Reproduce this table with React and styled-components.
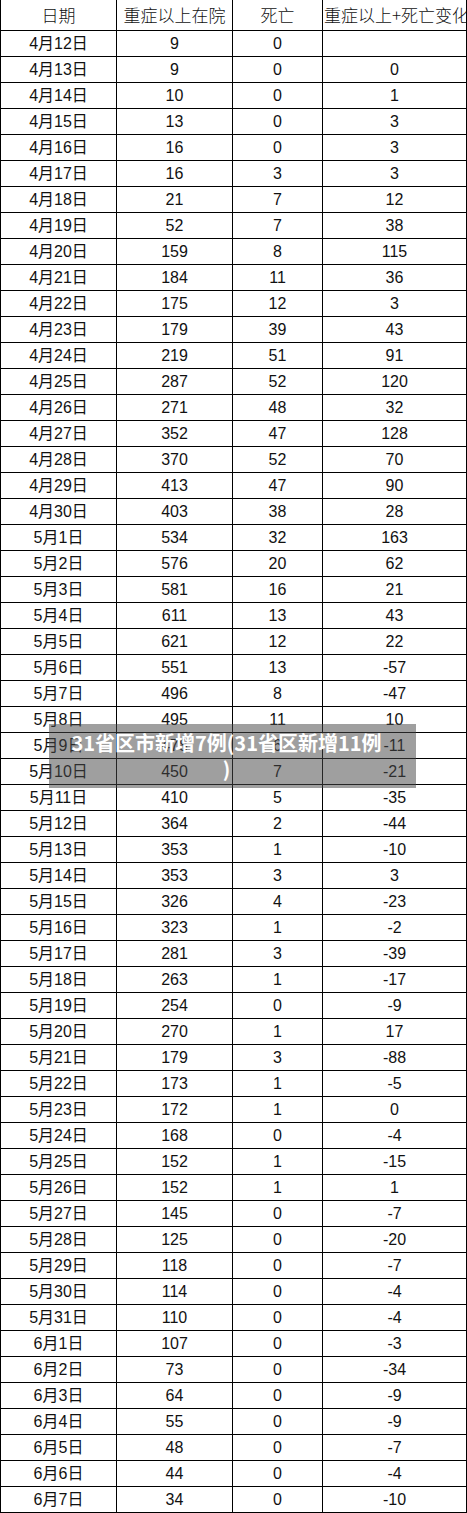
import React from 'react';
import styled, { createGlobalStyle } from 'styled-components';

const GlobalStyle = createGlobalStyle`
  html, body {
    margin: 0;
    padding: 0;
    background: #fff;
  }
  body {
    font-family: 'Liberation Sans', 'Noto Sans CJK SC', sans-serif;
  }
  * {
    box-sizing: border-box;
  }
`;

const rows = [
  ['4月12日', 9, 0, ''],
  ['4月13日', 9, 0, 0],
  ['4月14日', 10, 0, 1],
  ['4月15日', 13, 0, 3],
  ['4月16日', 16, 0, 3],
  ['4月17日', 16, 3, 3],
  ['4月18日', 21, 7, 12],
  ['4月19日', 52, 7, 38],
  ['4月20日', 159, 8, 115],
  ['4月21日', 184, 11, 36],
  ['4月22日', 175, 12, 3],
  ['4月23日', 179, 39, 43],
  ['4月24日', 219, 51, 91],
  ['4月25日', 287, 52, 120],
  ['4月26日', 271, 48, 32],
  ['4月27日', 352, 47, 128],
  ['4月28日', 370, 52, 70],
  ['4月29日', 413, 47, 90],
  ['4月30日', 403, 38, 28],
  ['5月1日', 534, 32, 163],
  ['5月2日', 576, 20, 62],
  ['5月3日', 581, 16, 21],
  ['5月4日', 611, 13, 43],
  ['5月5日', 621, 12, 22],
  ['5月6日', 551, 13, -57],
  ['5月7日', 496, 8, -47],
  ['5月8日', 495, 11, 10],
  ['5月9日', 478, 6, -11],
  ['5月10日', 450, 7, -21],
  ['5月11日', 410, 5, -35],
  ['5月12日', 364, 2, -44],
  ['5月13日', 353, 1, -10],
  ['5月14日', 353, 3, 3],
  ['5月15日', 326, 4, -23],
  ['5月16日', 323, 1, -2],
  ['5月17日', 281, 3, -39],
  ['5月18日', 263, 1, -17],
  ['5月19日', 254, 0, -9],
  ['5月20日', 270, 1, 17],
  ['5月21日', 179, 3, -88],
  ['5月22日', 173, 1, -5],
  ['5月23日', 172, 1, 0],
  ['5月24日', 168, 0, -4],
  ['5月25日', 152, 1, -15],
  ['5月26日', 152, 1, 1],
  ['5月27日', 145, 0, -7],
  ['5月28日', 125, 0, -20],
  ['5月29日', 118, 0, -7],
  ['5月30日', 114, 0, -4],
  ['5月31日', 110, 0, -4],
  ['6月1日', 107, 0, -3],
  ['6月2日', 73, 0, -34],
  ['6月3日', 64, 0, -9],
  ['6月4日', 55, 0, -9],
  ['6月5日', 48, 0, -7],
  ['6月6日', 44, 0, -4],
  ['6月7日', 34, 0, -10],
];

const headers = ['日期', '重症以上在院', '死亡', '重症以上+死亡变化'];

export default function App() {
  return (
    <>
      <GlobalStyle />
      <Wrapper>
        <Table>
          {headers.map((h, i) => (
            <HeadCell key={h} $first={i === 0} $clip={i === 3}>
              {h}
            </HeadCell>
          ))}
          {rows.map((r) =>
            r.map((v, i) => (
              <Cell key={r[0] + i} $first={i === 0}>
                {v}
              </Cell>
            ))
          )}
        </Table>
        <Caption>
          31省区市新增7例(31省区新增11例
          <br />)
        </Caption>
      </Wrapper>
    </>
  );
}

const Wrapper = styled.div`
  position: relative;
  width: 467px;
`;

const Table = styled.div`
  display: grid;
  grid-template-columns: 117px 116px 90px 144px;
  grid-template-rows: 31px;
  grid-auto-rows: 26px;
  color: #111;
`;

const Cell = styled.div`
  display: flex;
  align-items: center;
  justify-content: center;
  border-right: 1px solid #000;
  border-bottom: 1px solid #000;
  border-left: ${(p) => (p.$first ? '1px solid #000' : 'none')};
  font-size: 16px;
  line-height: 1;
  padding-top: 1px;
  white-space: nowrap;
`;

const HeadCell = styled(Cell)`
  font-size: 17px;
  font-family: 'Noto Sans CJK SC', 'Liberation Sans', sans-serif;
  font-weight: 300;
  overflow: hidden;
  padding-top: 0;
  padding-bottom: 1px;
  justify-content: ${(p) => (p.$clip ? 'flex-start' : 'center')};
  padding-left: ${(p) => (p.$clip ? '1px' : '0')};
`;

const Caption = styled.div`
  position: absolute;
  top: 724px;
  left: 49px;
  width: 367px;
  height: 64px;
  padding: 6px 18px 6px 6px;
  background: rgba(70, 70, 70, 0.52);
  color: #fff;
  font-family: 'Noto Sans CJK SC', sans-serif;
  font-weight: 700;
  font-size: 20px;
  line-height: 26px;
  text-align: center;
  white-space: nowrap;
`;
